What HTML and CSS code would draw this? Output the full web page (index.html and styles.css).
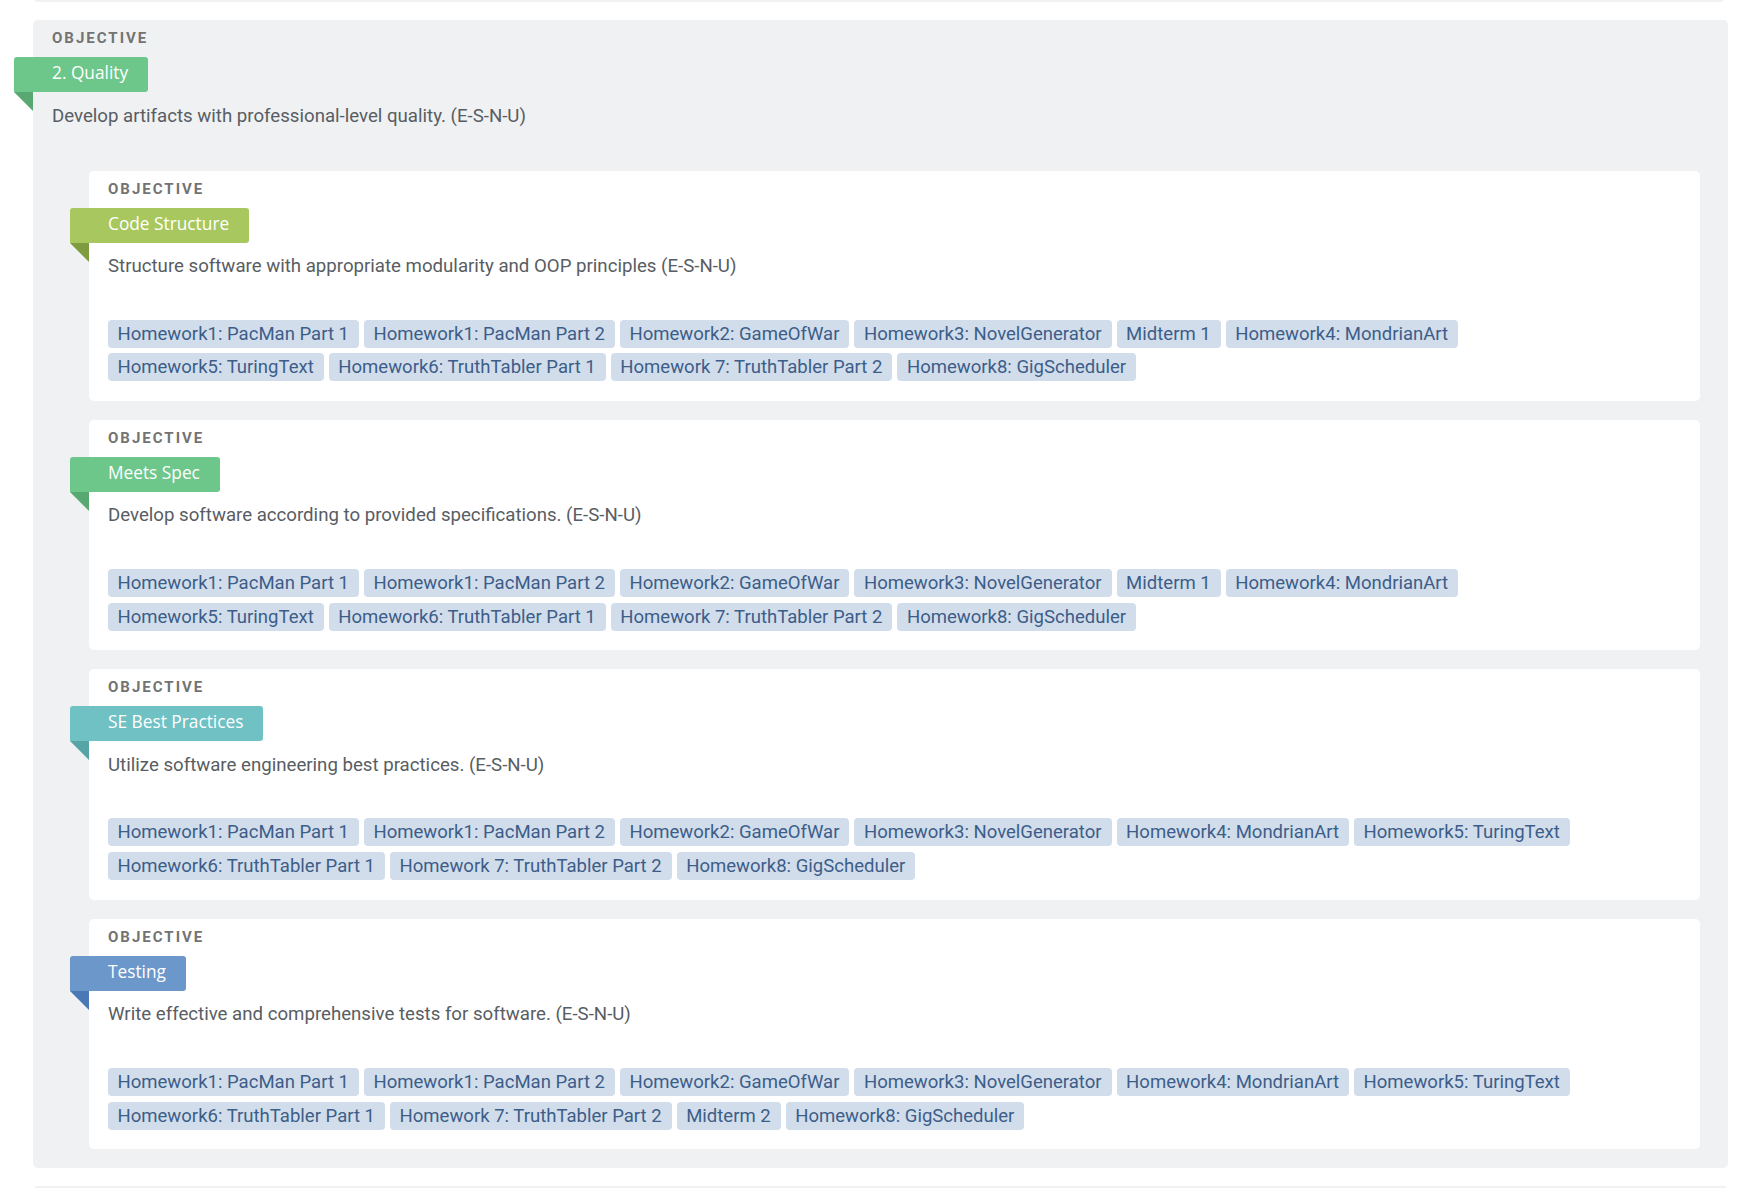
FILE: index.html
```html
<!DOCTYPE html>
<html lang="en">
<head>
<meta charset="utf-8">
<title>Objectives</title>
<link rel="stylesheet" href="styles.css">
</head>
<body>
<div class="stack">
  <section class="objective objective--peek-top"></section>

  <section class="objective">
    <div class="obj-label">Objective</div>
    <div class="ribbon ribbon--green">2. Quality</div>
    <p class="obj-desc">Develop artifacts with professional-level quality. (E-S-N-U)</p>

    <div class="children">
      <section class="card">
        <div class="obj-label">Objective</div>
        <div class="ribbon ribbon--lime">Code Structure</div>
        <p class="obj-desc">Structure software with appropriate modularity and OOP principles (E-S-N-U)</p>
        <ul class="tags">
          <li class="tag">Homework1: PacMan Part 1</li>
          <li class="tag">Homework1: PacMan Part 2</li>
          <li class="tag">Homework2: GameOfWar</li>
          <li class="tag">Homework3: NovelGenerator</li>
          <li class="tag">Midterm 1</li>
          <li class="tag">Homework4: MondrianArt</li>
          <li class="tag">Homework5: TuringText</li>
          <li class="tag">Homework6: TruthTabler Part 1</li>
          <li class="tag">Homework 7: TruthTabler Part 2</li>
          <li class="tag">Homework8: GigScheduler</li>
        </ul>
      </section>

      <section class="card">
        <div class="obj-label">Objective</div>
        <div class="ribbon ribbon--green">Meets Spec</div>
        <p class="obj-desc">Develop software according to provided specifications. (E-S-N-U)</p>
        <ul class="tags">
          <li class="tag">Homework1: PacMan Part 1</li>
          <li class="tag">Homework1: PacMan Part 2</li>
          <li class="tag">Homework2: GameOfWar</li>
          <li class="tag">Homework3: NovelGenerator</li>
          <li class="tag">Midterm 1</li>
          <li class="tag">Homework4: MondrianArt</li>
          <li class="tag">Homework5: TuringText</li>
          <li class="tag">Homework6: TruthTabler Part 1</li>
          <li class="tag">Homework 7: TruthTabler Part 2</li>
          <li class="tag">Homework8: GigScheduler</li>
        </ul>
      </section>

      <section class="card">
        <div class="obj-label">Objective</div>
        <div class="ribbon ribbon--teal">SE Best Practices</div>
        <p class="obj-desc">Utilize software engineering best practices. (E-S-N-U)</p>
        <ul class="tags">
          <li class="tag">Homework1: PacMan Part 1</li>
          <li class="tag">Homework1: PacMan Part 2</li>
          <li class="tag">Homework2: GameOfWar</li>
          <li class="tag">Homework3: NovelGenerator</li>
          <li class="tag">Homework4: MondrianArt</li>
          <li class="tag">Homework5: TuringText</li>
          <li class="tag">Homework6: TruthTabler Part 1</li>
          <li class="tag">Homework 7: TruthTabler Part 2</li>
          <li class="tag">Homework8: GigScheduler</li>
        </ul>
      </section>

      <section class="card">
        <div class="obj-label">Objective</div>
        <div class="ribbon ribbon--blue">Testing</div>
        <p class="obj-desc">Write effective and comprehensive tests for software. (E-S-N-U)</p>
        <ul class="tags">
          <li class="tag">Homework1: PacMan Part 1</li>
          <li class="tag">Homework1: PacMan Part 2</li>
          <li class="tag">Homework2: GameOfWar</li>
          <li class="tag">Homework3: NovelGenerator</li>
          <li class="tag">Homework4: MondrianArt</li>
          <li class="tag">Homework5: TuringText</li>
          <li class="tag">Homework6: TruthTabler Part 1</li>
          <li class="tag">Homework 7: TruthTabler Part 2</li>
          <li class="tag">Midterm 2</li>
          <li class="tag">Homework8: GigScheduler</li>
        </ul>
      </section>
    </div>
  </section>

  <section class="objective objective--peek-bottom"></section>
</div>
</body>
</html>
```

FILE: styles.css
```css
html, body {
  margin: 0;
  padding: 0;
  background: #ffffff;
}

body {
  font-family: Roboto, "Noto Sans", "Liberation Sans", sans-serif;
  color: #585d63;
  overflow: hidden;
}

.stack {
  padding: 0 18px 0 33px;
}

.objective {
  background: #f0f1f3;
  border-radius: 5px;
  padding: 9px 28px 19px 19px;
  margin-bottom: 18px;
}

.objective--peek-top {
  height: 40px;
  padding: 0;
  margin-top: -38px;
  margin-right: 3px;
}

.objective--peek-bottom {
  height: 60px;
  padding: 0;
}

.obj-label {
  font-weight: 700;
  font-size: 15px;
  line-height: 18px;
  letter-spacing: 2px;
  text-transform: uppercase;
  color: #737373;
}

.ribbon {
  position: relative;
  width: fit-content;
  margin: 10px 0 0 -38px;
  padding: 0 20px 0 38px;
  height: 35px;
  line-height: 32px;
  font-family: "Open Sans", "Noto Sans", sans-serif;
  font-size: 17.3px;
  color: #ffffff;
  border-radius: 3px 3px 3px 0;
  background: var(--ribbon);
}

.ribbon::after {
  content: "";
  position: absolute;
  left: 0;
  top: 100%;
  width: 0;
  height: 0;
  border-top: 19px solid var(--fold);
  border-left: 19px solid transparent;
}

.ribbon--green { --ribbon: #6dc68a; --fold: #58a872; }
.ribbon--lime  { --ribbon: #a8c75e; --fold: #7f9b3f; }
.ribbon--teal  { --ribbon: #6fc1c4; --fold: #57a4a7; }
.ribbon--blue  { --ribbon: #6b97cb; --fold: #4a78b6; }

.obj-desc {
  margin: 10.5px 0 0;
  font-size: 18.65px;
  line-height: 26px;
  color: #585d63;
}

.children {
  margin: 42px 0 0 37px;
}

.card {
  background: #ffffff;
  border-radius: 5px;
  padding: 9px 19px 19.5px 19px;
  margin-bottom: 19.3px;
}

.card:last-child {
  margin-bottom: 0;
}

.tags {
  list-style: none;
  margin: 40.5px 0 0;
  padding: 0 50px 0 0;
  display: flex;
  flex-wrap: wrap;
  gap: 5.7px 5px;
}

.tag {
  background: #d1ddeb;
  color: #3d5d89;
  font-size: 18.55px;
  line-height: 28px;
  padding: 0 10px 0 9.5px;
  border-radius: 4px;
}
```
